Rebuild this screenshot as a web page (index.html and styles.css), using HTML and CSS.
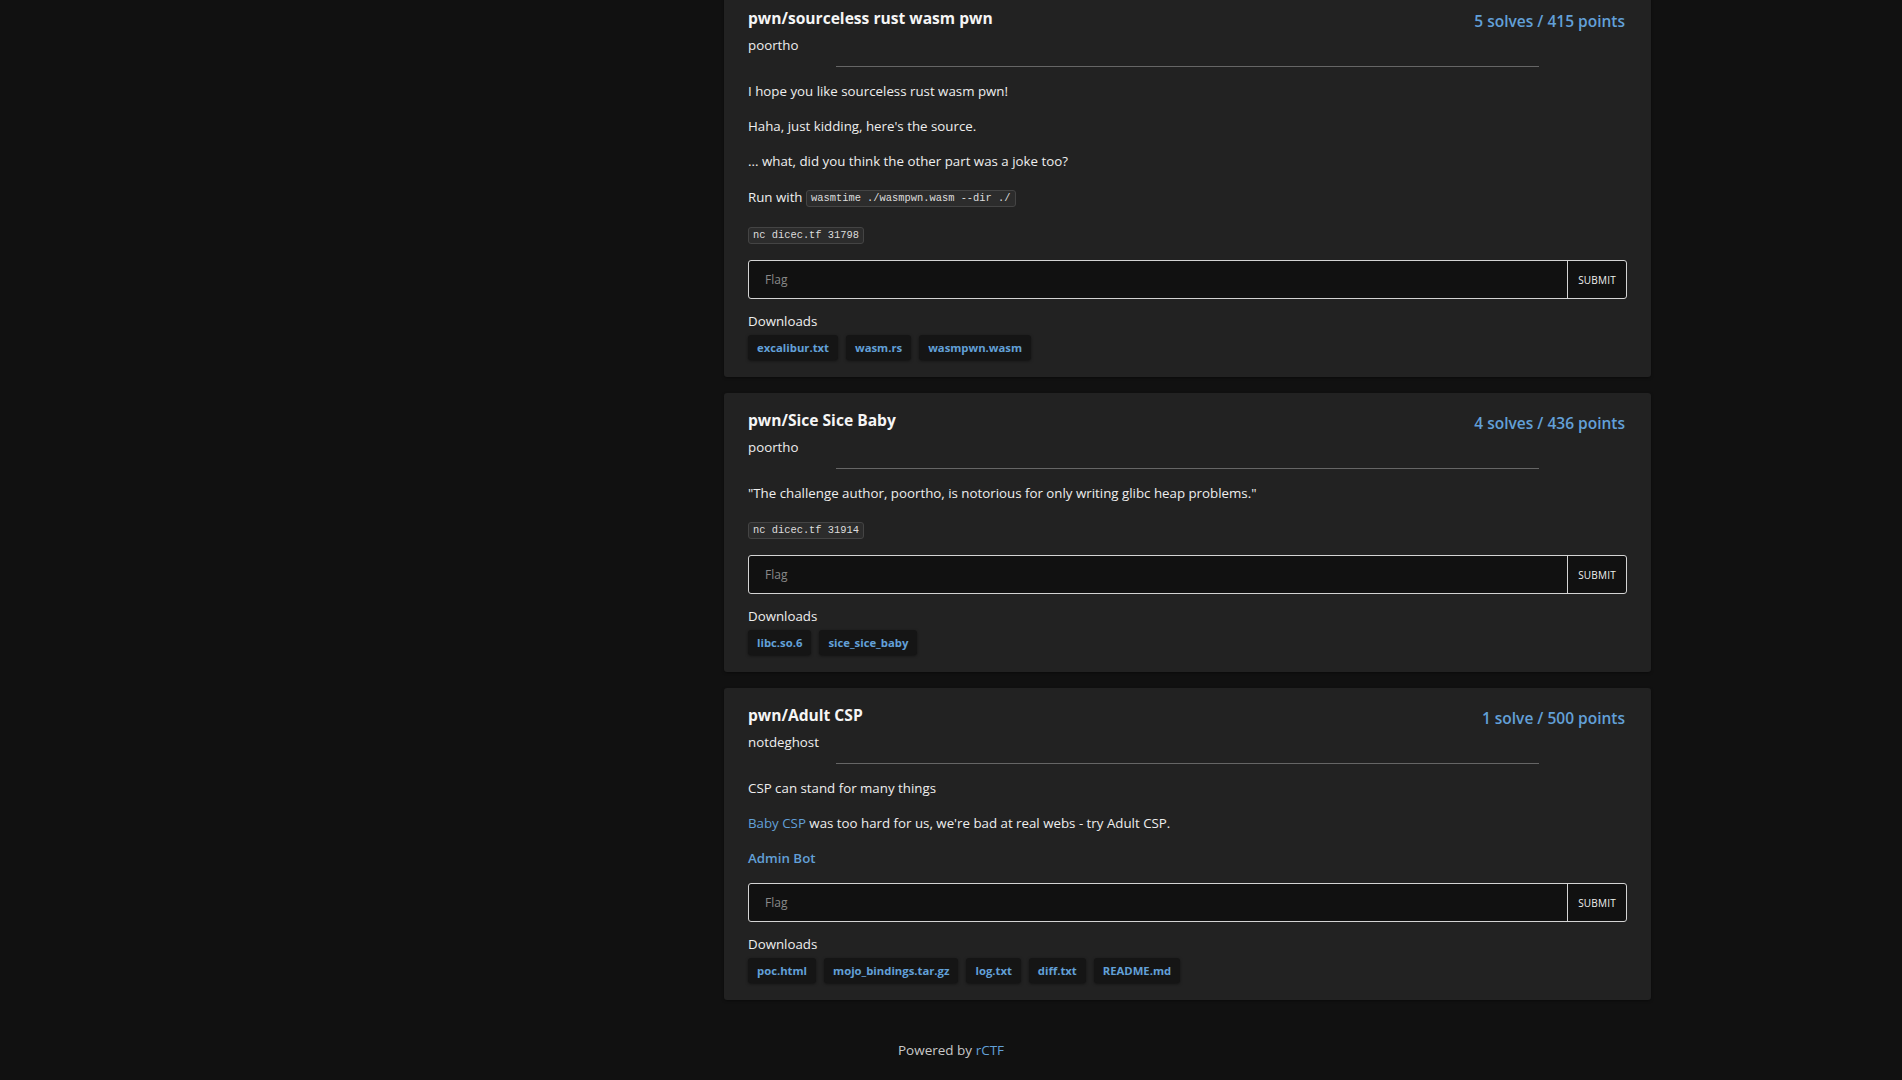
FILE: index.html
```html
<!DOCTYPE html>
<html>
<head>
<meta charset="utf-8">
<link rel="stylesheet" href="styles.css">
</head>
<body>
<div class="layout">
  <aside class="sidebar"></aside>
  <main class="challenges">
    <section class="card">
      <div class="card-head">
        <div>
          <h2 class="title">pwn/sourceless rust wasm pwn</h2>
          <div class="author">poortho</div>
        </div>
        <div class="score">5 solves / 415 points</div>
      </div>
      <hr class="divider">
      <div class="desc">
        <p>I hope you like sourceless rust wasm pwn!</p>
        <p>Haha, just kidding, here's the source.</p>
        <p>... what, did you think the other part was a joke too?</p>
        <p class="has-code">Run with <code>wasmtime ./wasmpwn.wasm --dir ./</code></p>
        <p class="has-code"><code>nc dicec.tf 31798</code></p>
      </div>
      <form class="flag-form">
        <input class="flag-input" type="text" placeholder="Flag">
        <button class="flag-submit" type="button">Submit</button>
      </form>
      <div class="downloads-label">Downloads</div>
      <div class="downloads">
        <a class="tag">excalibur.txt</a>
        <a class="tag">wasm.rs</a>
        <a class="tag">wasmpwn.wasm</a>
      </div>
    </section>

    <section class="card">
      <div class="card-head">
        <div>
          <h2 class="title">pwn/Sice Sice Baby</h2>
          <div class="author">poortho</div>
        </div>
        <div class="score">4 solves / 436 points</div>
      </div>
      <hr class="divider">
      <div class="desc">
        <p>"The challenge author, poortho, is notorious for only writing glibc heap problems."</p>
        <p class="has-code"><code>nc dicec.tf 31914</code></p>
      </div>
      <form class="flag-form">
        <input class="flag-input" type="text" placeholder="Flag">
        <button class="flag-submit" type="button">Submit</button>
      </form>
      <div class="downloads-label">Downloads</div>
      <div class="downloads">
        <a class="tag">libc.so.6</a>
        <a class="tag">sice_sice_baby</a>
      </div>
    </section>

    <section class="card">
      <div class="card-head">
        <div>
          <h2 class="title">pwn/Adult CSP</h2>
          <div class="author">notdeghost</div>
        </div>
        <div class="score">1 solve / 500 points</div>
      </div>
      <hr class="divider">
      <div class="desc">
        <p>CSP can stand for many things</p>
        <p><a class="link">Baby CSP</a> was too hard for us, we're bad at real webs - try Adult CSP.</p>
        <p><a class="link strong">Admin Bot</a></p>
      </div>
      <form class="flag-form">
        <input class="flag-input" type="text" placeholder="Flag">
        <button class="flag-submit" type="button">Submit</button>
      </form>
      <div class="downloads-label">Downloads</div>
      <div class="downloads">
        <a class="tag">poc.html</a>
        <a class="tag">mojo_bindings.tar.gz</a>
        <a class="tag">log.txt</a>
        <a class="tag">diff.txt</a>
        <a class="tag">README.md</a>
      </div>
    </section>
  </main>
</div>
<footer class="footer">Powered by <a class="link">rCTF</a></footer>
</body>
</html>
```

FILE: styles.css
```css
* { box-sizing: border-box; }

html, body {
  margin: 0;
  padding: 0;
  background: #111111;
  color: #eeeeee;
  font-family: "Open Sans", "Noto Sans", sans-serif;
  font-size: 13.3px;
  line-height: 21px;
}

.layout {
  display: grid;
  grid-template-columns: 724px 927px;
  margin-top: -9px;
}

.challenges {
  display: flex;
  flex-direction: column;
  gap: 16px;
}

.card {
  background: #222222;
  border-radius: 3px;
  padding: 15px 24px 17px;
  box-shadow: 0 1px 3px rgba(0,0,0,0.4);
}

.card-head {
  display: flex;
  justify-content: space-between;
  align-items: flex-start;
}

.title {
  margin: 0;
  font-size: 15.6px;
  font-weight: 700;
  line-height: 24px;
  color: #f5f5f5;
}

.author {
  margin-top: 4px;
  line-height: 22px;
}

.score {
  font-size: 15.5px;
  font-weight: 600;
  line-height: 24px;
  color: #62a0d8;
  margin-top: 3px;
  padding-right: 2px;
}

.divider {
  width: 80%;
  margin: 10px auto 14px;
  border: 0;
  border-top: 1px solid #666666;
  height: 0;
}

.desc p {
  margin: 0 0 14px;
}

.desc p.has-code {
  line-height: 23px;
}

code {
  font-family: "Liberation Mono", "DejaVu Sans Mono", monospace;
  font-size: 10.4px;
  line-height: 15px;
  height: 17px;
  display: inline-block;
  padding: 0 4px;
  background: #2c2c2c;
  border: 1px solid #444444;
  border-radius: 3px;
  color: #dddddd;
  vertical-align: middle;
}

.link {
  color: #62a0d8;
  text-decoration: none;
}

.link.strong { font-weight: 600; }

.flag-form {
  display: flex;
  height: 39px;
  border: 1px solid #d4d4d4;
  border-radius: 3px;
  background: #111111;
  margin: 0;
}

.flag-input {
  flex: 1;
  background: transparent;
  border: 0;
  outline: none;
  color: #eeeeee;
  padding: 0 16px;
  font-family: inherit;
  font-size: 12px;
}

.flag-input::placeholder { color: #8a8a8a; }

.flag-submit {
  width: 59px;
  background: transparent;
  border: 0;
  border-left: 1px solid #d4d4d4;
  color: #f0f0f0;
  font-family: inherit;
  font-size: 10px;
  text-transform: uppercase;
  letter-spacing: 0.2px;
  padding: 0;
}

.downloads-label {
  margin-top: 12px;
  line-height: 21px;
}

.downloads {
  display: flex;
  gap: 8px;
  margin-top: 3px;
}

.tag {
  display: inline-block;
  background: #151515;
  color: #62a0d8;
  font-size: 11.3px;
  font-weight: 700;
  line-height: 25px;
  padding: 0 9px;
  border-radius: 3px;
  box-shadow: 0 1px 3px rgba(0,0,0,0.5);
}

.footer {
  text-align: center;
  color: #c8c8c8;
  padding: 40px 0 26px;
  font-size: 13.5px;
}
```
